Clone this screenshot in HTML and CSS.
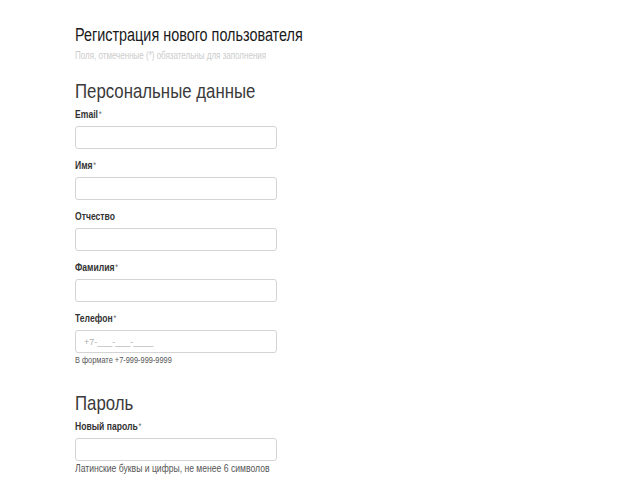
FILE: index.html
```html
<!DOCTYPE html>
<html lang="ru">
<head>
<meta charset="utf-8">
<title>Регистрация нового пользователя</title>
<link rel="stylesheet" href="styles.css">
</head>
<body>
<main class="page">
  <h1 class="title">Регистрация нового пользователя</h1>
  <p class="note">Поля, отмеченные (*) обязательны для заполнения</p>

  <h2 class="section-title">Персональные данные</h2>
  <div class="field">
    <label class="label">Email<span class="req">*</span></label>
    <input class="input" type="text">
  </div>
  <div class="field">
    <label class="label">Имя<span class="req">*</span></label>
    <input class="input" type="text">
  </div>
  <div class="field">
    <label class="label">Отчество</label>
    <input class="input" type="text">
  </div>
  <div class="field">
    <label class="label">Фамилия<span class="req">*</span></label>
    <input class="input" type="text">
  </div>
  <div class="field field-last">
    <label class="label">Телефон<span class="req">*</span></label>
    <input class="input" type="text" placeholder="+7-___-___-____">
    <p class="hint">В формате +7-999-999-9999</p>
  </div>

  <h2 class="section-title section-gap">Пароль</h2>
  <div class="field field-last">
    <label class="label">Новый пароль<span class="req">*</span></label>
    <input class="input" type="password">
    <p class="hint hint-long">Латинские буквы и цифры, не менее 6 символов</p>
  </div>
</main>
</body>
</html>
```

FILE: styles.css
```css
html, body {
  margin: 0;
  padding: 0;
  background: #ffffff;
}

body {
  font-family: "Liberation Sans", Arial, sans-serif;
  color: #333333;
}

.page {
  padding: 24px 0 0 75px;
}

/* narrow rendering of the text, like the condensed face of the original */
.title,
.note,
.section-title,
.label,
.hint {
  display: block;
  transform: scaleX(0.8);
  transform-origin: 0 50%;
  white-space: nowrap;
}

.title {
  margin: 0;
  font-size: 18px;
  line-height: 22px;
  font-weight: normal;
  color: #1a1a1a;
}

.note {
  margin: 3px 0 0;
  font-size: 10px;
  line-height: 14px;
  color: #cccccc;
}

.section-title {
  margin: 16px 0 0;
  font-size: 21px;
  line-height: 24px;
  font-weight: normal;
  color: #3a3a3a;
}

.section-gap {
  margin-top: 24px;
}

.field {
  display: flex;
  flex-direction: column;
  align-items: flex-start;
  margin-bottom: 5px;
}

.field-last {
  margin-bottom: 0;
}

.label {
  margin-top: 3px;
  font-size: 10.75px;
  line-height: 16px;
  font-weight: bold;
  color: #333333;
}

.req {
  font-weight: normal;
  font-size: 9px;
  vertical-align: 1px;
  color: #666666;
  margin-left: 1px;
}

.input {
  box-sizing: border-box;
  margin: 4px 0 0;
  width: 202px;
  height: 23px;
  padding: 0 8px;
  border: 1px solid #d4d4d4;
  border-radius: 3px;
  background: #ffffff;
  font-family: "Liberation Sans", Arial, sans-serif;
  font-size: 9px;
  color: #333333;
  outline: none;
}

.input::placeholder {
  color: #b0b0b0;
}

.hint {
  margin: 0;
  font-size: 9.25px;
  line-height: 14px;
  color: #555555;
}

.hint-long {
  font-size: 10.75px;
}
```
